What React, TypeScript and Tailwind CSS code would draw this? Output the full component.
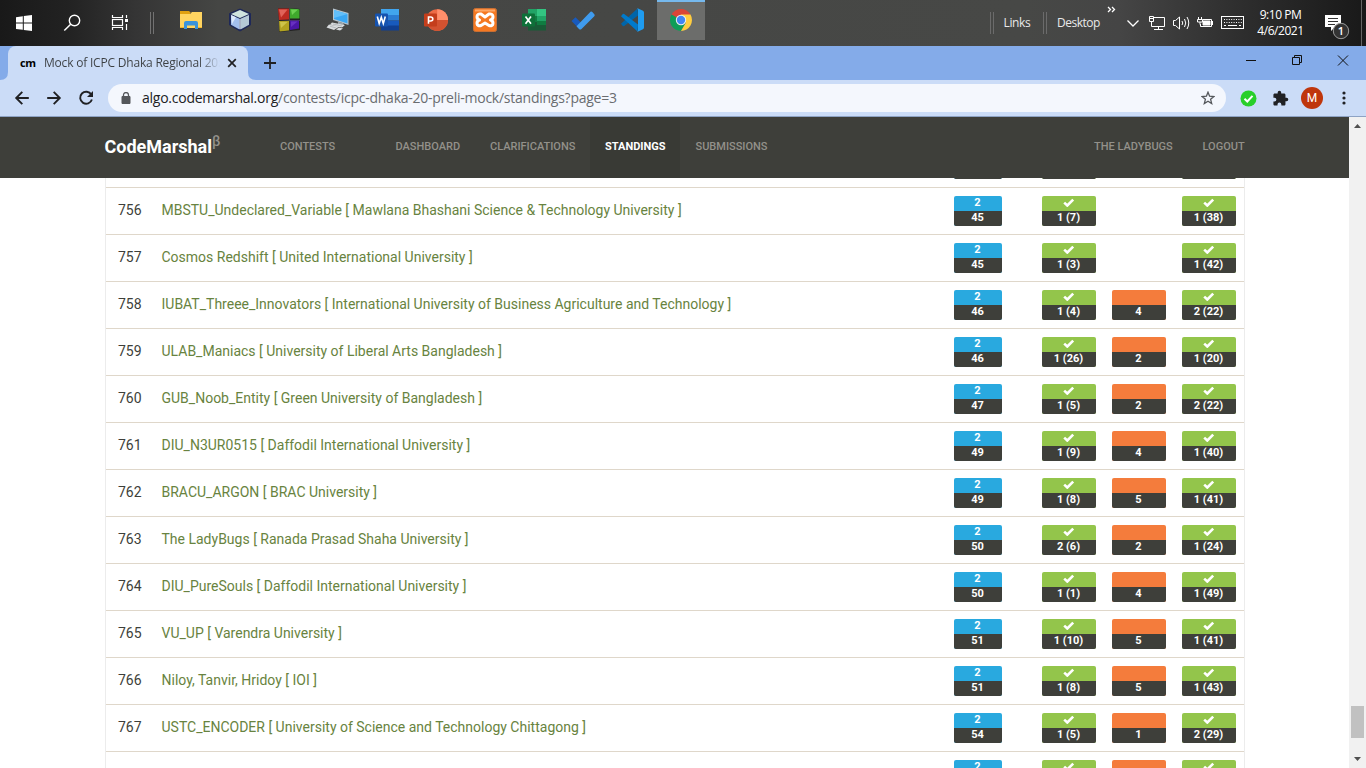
import React from "react";

type Solve = string | null;
type Row = { rank: number; name: string; time: number; a: string; b: Solve; c: string };

const rows: Row[] = [
  { rank: 755, name: "", time: 45, a: "1 (5)", b: null, c: "1 (38)" },
  { rank: 756, name: "MBSTU_Undeclared_Variable [ Mawlana Bhashani Science & Technology University ]", time: 45, a: "1 (7)", b: null, c: "1 (38)" },
  { rank: 757, name: "Cosmos Redshift [ United International University ]", time: 45, a: "1 (3)", b: null, c: "1 (42)" },
  { rank: 758, name: "IUBAT_Threee_Innovators [ International University of Business Agriculture and Technology ]", time: 46, a: "1 (4)", b: "4", c: "2 (22)" },
  { rank: 759, name: "ULAB_Maniacs [ University of Liberal Arts Bangladesh ]", time: 46, a: "1 (26)", b: "2", c: "1 (20)" },
  { rank: 760, name: "GUB_Noob_Entity [ Green University of Bangladesh ]", time: 47, a: "1 (5)", b: "2", c: "2 (22)" },
  { rank: 761, name: "DIU_N3UR0515 [ Daffodil International University ]", time: 49, a: "1 (9)", b: "4", c: "1 (40)" },
  { rank: 762, name: "BRACU_ARGON [ BRAC University ]", time: 49, a: "1 (8)", b: "5", c: "1 (41)" },
  { rank: 763, name: "The LadyBugs [ Ranada Prasad Shaha University ]", time: 50, a: "2 (6)", b: "2", c: "1 (24)" },
  { rank: 764, name: "DIU_PureSouls [ Daffodil International University ]", time: 50, a: "1 (1)", b: "4", c: "1 (49)" },
  { rank: 765, name: "VU_UP [ Varendra University ]", time: 51, a: "1 (10)", b: "5", c: "1 (41)" },
  { rank: 766, name: "Niloy, Tanvir, Hridoy [ IOI ]", time: 51, a: "1 (8)", b: "5", c: "1 (43)" },
  { rank: 767, name: "USTC_ENCODER [ University of Science and Technology Chittagong ]", time: 54, a: "1 (5)", b: "1", c: "2 (29)" },
];

function Check() {
  return (
    <svg width="12" height="9" viewBox="0 0 12 9" className="mt-[2px]">
      <path d="M1.200 4.600 L4.300 7.500 L10.200 1.600" fill="none" stroke="#fff" strokeWidth="2.600" />
    </svg>
  );
}

function Badge({ kind, bottom, top }: { kind: "blue" | "green" | "orange"; bottom: string; top?: string }) {
  const look = {
    blue: "w-12 bg-[#29a9df]",
    green: "w-[54px] bg-[#93c54b]",
    orange: "w-[54px] bg-[#f47c3c]",
  }[kind];
  return (
    <div className={`flex h-[30px] shrink-0 flex-col overflow-hidden rounded-[2px] text-center text-[11px] leading-[13px] font-bold text-white ${look}`}>
      <div className="flex h-[15px] justify-center">{kind === "green" ? <Check /> : <span className="pr-px">{top}</span>}</div>
      <div className="h-[15px] bg-[#3e3f3a] pr-px">{bottom}</div>
    </div>
  );
}

function StandingRow({ row }: { row: Row }) {
  return (
    <div className="flex h-[47px] shrink-0 items-start border-b border-[#dfd7ca] pt-2 pr-2 pl-3">
      <div className="mt-[4px] w-[43.500px] text-[14px] leading-5 text-[#3e3f3a]">{row.name && row.rank}</div>
      <div className="mt-[4px] flex-1 text-[14px] leading-5 whitespace-nowrap text-[#688340]">{row.name}</div>
      <Badge kind="blue" top="2" bottom={String(row.time)} />
      <div className="ml-10 flex gap-4">
        <Badge kind="green" bottom={row.a} />
        {row.b ? <Badge kind="orange" bottom={row.b} /> : <div className="w-[54px]" />}
        <Badge kind="green" bottom={row.c} />
      </div>
    </div>
  );
}

function AppIcon({ children }: { children: React.ReactNode }) {
  return (
    <div className="flex h-10 w-[49px] shrink-0 items-center justify-center">
      <svg width="24" height="24" viewBox="0 0 24 24">{children}</svg>
    </div>
  );
}

function Taskbar() {
  return (
    <div className="flex h-[46px] shrink-0 items-start overflow-hidden bg-[linear-gradient(90deg,#191919_0%,#222222_5%,#353535_10%,#454644_16%,#474846_75%,#454545_82%,#2b2b2b_92%,#191919_100%)] font-['Open_Sans','Noto_Sans',sans-serif] text-white">
      <svg width="166" height="46" viewBox="0 0 166 46" className="shrink-0">
        <path d="M16 17.200 L22.800 16.200 V22.500 H16z M23.800 16.100 L32 15 V22.500 H23.800z M16 23.500 H22.800 V29.800 L16 28.900z M23.800 23.500 H32 V31 L23.800 29.900z" fill="#fff" />
        <circle cx="74.500" cy="20.500" r="5.200" fill="none" stroke="#fff" strokeWidth="1.400" />
        <path d="M70.700 24.300 L64.300 30.500" stroke="#fff" strokeWidth="1.500" />
        <g fill="none" stroke="#fff" strokeWidth="1.200">
          <path d="M112.500 15 V17.500 H122.500 V15 M112.500 30 V27.500 H122.500 V30 M126.500 15 V18 M126.500 24 V30" />
          <rect x="112.500" y="19.500" width="10" height="6" />
        </g>
        <rect x="125" y="19" width="3" height="3" fill="#fff" />
        <path d="M150.500 12 V34 M153.500 12 V34" stroke="#727272" />
      </svg>
      <AppIcon>
        <path d="M1 3h9l2 2h-1v3H1z" fill="#e0a010" />
        <path d="M1 6h10l2-2h10v16H1z" fill="#ffd460" />
        <path d="M5 21v-6q0-2 2-2h10q2 0 2 2v6h-3v-3.500H8V21z" fill="#3993dc" />
        <path d="M1 19h4v1H1zM19 19h4v1h-4z" fill="#f3b52a" />
      </AppIcon>
      <AppIcon>
        <path d="M12 1 L22.500 5.500 V17 L12 23 L1.500 17 V5.500z" fill="#1e2858" stroke="#1e2858" strokeWidth="1" />
        <path d="M12 2 L21 6 L12 10 L3 6z" fill="#cfe3de" />
        <path d="M3 7 L11.500 10.800 V21.500 L3 16.700z" fill="#a3bfee" />
        <path d="M21 7 L12.500 10.800 V21.500 L21 16.700z" fill="#b5c9d6" />
        <path d="M3 7 L8 9.200 L4 16z" fill="#dce8fb" />
        <path d="M12 11 V21" stroke="#e8f0f8" />
      </AppIcon>
      <AppIcon>
        <path d="M1 0 H12 V12 L2 13z M13 0 L23 1 V12 H13z M2 13 H12.500 V23 L2 24z M13 13 H23 V22 L13 23z" fill="#222" />
        <path d="M1 0.500 H12 V11.500 L2 12z" fill="#bd2b22" />
        <path d="M2 1.500 H10.500 L4 9.500z" fill="#e06359" />
        <path d="M13 0.500 L22.500 1.300 V10.500 H13z" fill="#3fa92c" />
        <path d="M14 1.500 H21 L15 7z" fill="#6cd152" />
        <path d="M2 13 H12 V22.500 L2.500 23.500z" fill="#b3a421" />
        <path d="M3 14 H10.500 L4 20z" fill="#cdc44a" />
        <path d="M13 12.500 H22 V20.500 L13 22z" fill="#4c16a6" />
        <path d="M14 13.500 H20.500 L14 19z" fill="#6730c0" />
      </AppIcon>
      <AppIcon>
        <path d="M7 0.500 L22.500 5 V17 L7 12z" fill="#b7c5cf" />
        <path d="M8 2 L21.500 6 V15.500 L8 11z" fill="#3aa7f3" />
        <path d="M8 2 L21.500 6 L8 10z" fill="#62bffa" />
        <path d="M12 13.500 L17 15 L18 17 L12 16z" fill="#9aa5ad" />
        <path d="M6 14.500 L19 17 L16 19.500 L4 16.500z M3 16.500 L13 18.800 L8 22 L0.500 19.500z M13 19.500 L17 20.500 L14 22.500 L10 21.500z" fill="#d9dcde" />
        <path d="M7 16 L16 18 M4 18.200 L10 20" stroke="#9ba3a8" strokeWidth="0.600" />
      </AppIcon>
      <AppIcon>
        <path d="M6 1h18v6H6z" fill="#41a5ee" /><path d="M6 7h18v5.500H6z" fill="#2b7cd3" /><path d="M6 12.500h18V18H6z" fill="#185abd" /><path d="M6 17.500h18V22.500H6z" fill="#103f91" />
        <rect x="0" y="5.500" width="13" height="13" rx="1" fill="#1553b0" />
        <path d="M2.300 8.500 L4.200 15.500 L6.300 9.300 L8.300 15.500 L10.300 8.500" fill="none" stroke="#fff" strokeWidth="1.600" />
      </AppIcon>
      <AppIcon>
        <circle cx="13.200" cy="12" r="10.800" fill="#ed6c47" />
        <path d="M13.200 1.200 A10.800 10.800 0 0 1 24 12 H13.200z" fill="#ff8f6b" />
        <path d="M2.400 12 H24 A10.800 10.800 0 0 1 2.400 12z" fill="#d35230" />
        <rect x="0" y="5.500" width="13" height="13" rx="1" fill="#c43e1c" />
        <path d="M4.500 15.700 V9 H6.600 Q8.800 9 8.800 11 Q8.800 13 6.600 13 H4.500" fill="none" stroke="#fff" strokeWidth="1.600" />
      </AppIcon>
      <AppIcon>
        <rect x="0.500" y="0.500" width="23" height="23" rx="2" fill="#f57922" stroke="#c96f33" />
        <path d="M2 1.500h20v2H2z" fill="#fda765" />
        <path d="M8 6 C3 5 3 11 6.500 12 C3 13 3 19 8 17.500 L12 15 L16 17.500 C21 19 21 13 17.500 12 C21 11 21 5 16 6 L12 9z" fill="none" stroke="#fff" strokeWidth="3" strokeLinejoin="round" />
      </AppIcon>
      <AppIcon>
        <path d="M6 1h9v7H6z" fill="#21a366" /><path d="M15 1h9v7h-9z" fill="#33c481" /><path d="M6 8h9v7H6z" fill="#107c41" /><path d="M15 8h9v6h-9z" fill="#21a366" /><path d="M6 14h18v8.500H6z" fill="#185c37" /><path d="M15 13h9v4h-9z" fill="#107c41" />
        <rect x="0" y="5.500" width="13" height="13" rx="1" fill="#0e7039" />
        <path d="M3.500 8.500 L9 15.700 M9 8.500 L3.500 15.700" stroke="#fff" strokeWidth="1.700" />
      </AppIcon>
      <AppIcon>
        <path d="M0.500 13 L4.500 9.200 L11.500 16.200 L7.800 20.500z" fill="#185abd" />
        <path d="M5.500 18.300 L19.500 3.800 Q20.500 3 21.300 4 L23.500 6.500 Q24 7.500 23.300 8.200 L10.500 21 Q9.300 22 8 21z" fill="#3f9bee" />
      </AppIcon>
      <AppIcon>
        <path d="M17.500 0.500 L1 15.700 L3 18.200 L4.200 18 L18 7.500z" fill="#0065a9" />
        <path d="M17.500 23.500 L1 8.300 L3 5.800 L4.200 6 L18 16.500z" fill="#007acc" />
        <path d="M17 0 L23 2.800 Q24 3.300 24 4.500 V19.500 Q24 20.700 23 21.200 L17 24 Q18 23.300 18 21.500 V2.500 Q18 0.700 17 0z" fill="#1f9cf0" />
      </AppIcon>
      <div className="ml-px flex h-10 w-12 shrink-0 items-center justify-center border-t-2 border-[#76b9ed] bg-[#6c6d6b]">
        <svg width="24" height="24" viewBox="0 0 24 24" className="-mt-[2px]">
          <path d="M12 12 L2.500 6.500 A11 11 0 0 1 21.500 6.500z" fill="#db4437" />
          <path d="M12 12 L2.500 6.500 A11 11 0 0 0 12 23 L16.800 14.800z" fill="#0f9d58" />
          <path d="M12 6.500 H21.500 A11 11 0 0 1 12 23 L16.800 14.800z" fill="#ffcd40" />
          <circle cx="12" cy="12" r="5.200" fill="#f1f1f1" /><circle cx="12" cy="12" r="4.200" fill="#4285f4" />
        </svg>
      </div>
      <div className="flex-1" />
      <div className="mt-3 h-[22px] w-[4px] border-x border-[#6b6b6b]" />
      <div className="mt-[14px] ml-[9.500px] w-[39.500px] text-[12px] leading-[18px] tracking-[-0.350px] text-[#e9e9e9]">Links</div>
      <div className="mt-3 h-[22px] w-[4px] border-x border-[#6b6b6b]" />
      <div className="mt-[14px] ml-[10px] w-[49px] text-[12px] leading-[18px] tracking-[-0.500px] text-[#e9e9e9]">Desktop</div>
      <svg width="140" height="46" viewBox="1106 0 140 46" className="shrink-0" fill="none" stroke="#fff">
        <path d="M1108 7 L1110.500 9.500 L1108 12 M1112 7 L1114.500 9.500 L1112 12" strokeWidth="1.300" />
        <path d="M1127.500 20.500 L1133 26 L1138.500 20.500" strokeWidth="1.300" />
        <path d="M1153.500 17.500 H1164.500 V26.500 H1151.500 V22 M1158.500 27 V29.500 M1154 29.500 H1163 M1149.500 16.500 H1153.500 V21.500 H1149.500z M1150 18.500 H1153" />
        <path d="M1173.500 20.500 H1175.500 L1179.500 17 V29 L1175.500 25.500 H1173.500z M1182 21 Q1183.500 23 1182 25 M1184.500 19 Q1187 23 1184.500 27 M1187 17 Q1190.500 23 1187 29" />
        <path d="M1202.500 19.500 H1211.500 V26.500 H1200.500 V24 M1212.500 21 V25 M1198.500 17 V19 M1201.500 17 V19 M1197.500 19.500 H1202.500 V22 H1197.500z M1200 22 V24.500" />
        <path d="M1203 21 H1210 V25 H1203z" fill="#fff" />
        <rect x="1221.500" y="16.500" width="22" height="12" />
        <path d="M1224 19.500 H1242 M1224 22.500 H1242" strokeDasharray="1 1.400" /><path d="M1224 25.500 H1226 M1228 25.500 H1237 M1239 25.500 H1241" />
      </svg>
      <div className="mt-[7px] mr-px w-[69px] text-center text-[12px] leading-4 tracking-[-0.450px]">
        <div>9:10 PM</div>
        <div>4/6/2021</div>
      </div>
      <svg width="50" height="46" viewBox="1316 0 50 46" className="shrink-0">
        <path d="M1325 15 H1341 V27 H1335 L1331 31 V27 H1325z" fill="#fff" />
        <path d="M1328 18.500 H1338 M1328 21.500 H1338 M1328 24.500 H1335" stroke="#333" />
        <circle cx="1341" cy="31" r="7.700" fill="#333" stroke="#9b9b9b" />
        <text x="1341" y="35" textAnchor="middle" fontSize="11" fontWeight="600" fill="#fff">1</text>
        <path d="M1361.500 0 V46" stroke="#656565" />
      </svg>
    </div>
  );
}

function TabStrip() {
  return (
    <div className="flex h-[34px] shrink-0 items-end bg-[#84abe9] font-['Open_Sans','Noto_Sans',sans-serif]">
      <svg width="8" height="8" viewBox="0 0 8 8"><path d="M8 0 V8 H0 Q8 8 8 0z" fill="#cbdcf7" /></svg>
      <div className="flex h-[34px] w-60 items-center rounded-t-lg bg-[#cbdcf7]">
        <div className="ml-[12px] w-[24px] text-[11px] leading-[16px] font-bold tracking-[-0.300px] text-black">cm</div>
        <div className="w-[176px] overflow-hidden bg-[linear-gradient(90deg,#3c4043_0%,#3c4043_88%,transparent_100%)] bg-clip-text text-[12px] leading-[18px] tracking-[-0.200px] whitespace-nowrap text-transparent">Mock of ICPC Dhaka Regional 20:</div>
        <svg width="10" height="10" viewBox="0 0 10 10" className="ml-[7px]"><path d="M1.200 1.200 L8.800 8.800 M8.800 1.200 L1.200 8.800" stroke="#202124" strokeWidth="1.700" /></svg>
      </div>
      <svg width="8" height="8" viewBox="0 0 8 8"><path d="M0 0 V8 H8 Q0 8 0 0z" fill="#cbdcf7" /></svg>
      <svg width="12" height="12" viewBox="0 0 12 12" className="mb-[11px] ml-2"><path d="M6 0 V12 M0 6 H12" stroke="#202124" strokeWidth="1.800" /></svg>
      <div className="flex-1" />
      <svg width="126" height="34" viewBox="1240 46 126 34" fill="none" stroke="#111">
        <path d="M1246 60.500 H1256 M1338 55.500 L1348 65.500 M1348 55.500 L1338 65.500" />
        <path d="M1292.500 57.500 H1299.500 V64.500 H1292.500z M1294.500 57 V55.500 H1301.500 V62.500 H1300" />
      </svg>
    </div>
  );
}

function AddressBar() {
  return (
    <div className="flex h-[37px] shrink-0 items-center border-b border-[#8ea3c4] bg-[#cbdcf7] font-['Open_Sans','Noto_Sans',sans-serif]">
      <svg width="108" height="36" viewBox="0 80 108 36" fill="none" stroke="#202124" strokeWidth="1.900" className="shrink-0">
        <path d="M28.800 98 H16.500 M22.300 91.800 L16.200 98 L22.300 104.200" />
        <path d="M47.200 98 H59.500 M53.700 91.800 L59.800 98 L53.700 104.200" />
        <path d="M91.300 94.600 A6 6 0 1 0 91.900 99.500" />
        <path d="M93 91 V97 H87z" fill="#202124" stroke="none" />
      </svg>
      <div className="flex h-7 w-[1118px] items-center rounded-full bg-[#f4f7fd]">
        <svg width="10" height="12" viewBox="0 0 10 12" className="ml-[13px]"><path d="M1 4.500 H9 V11.500 H1z" fill="#54575b" stroke="#54575b" /><path d="M2.500 4.500 V3 A2.500 2.500 0 0 1 7.500 3 V4.500" fill="none" stroke="#54575b" strokeWidth="1.300" /></svg>
        <div className="ml-[11px] flex-1 text-[14px] leading-5 tracking-[-0.250px] text-[#696c70]"><span className="text-[#202124]">algo.codemarshal.org</span>/contests/icpc-dhaka-20-preli-mock/standings?page=3</div>
        <svg width="14" height="14" viewBox="0 0 14 14" className="mr-[11px]"><path d="M7 1.200 L8.600 5.200 L12.900 5.500 L9.600 8.300 L10.700 12.500 L7 10.200 L3.300 12.500 L4.400 8.300 L1.100 5.500 L5.400 5.200z" fill="none" stroke="#54575b" strokeWidth="1.300" /></svg>
      </div>
      <svg width="17" height="17" viewBox="0 0 17 17" className="ml-[13.500px]"><circle cx="8.500" cy="8.500" r="8" fill="#28cf2a" /><path d="M4.500 8.800 L7.300 11.500 L12.500 5.800" fill="none" stroke="#fff" strokeWidth="2" /></svg>
      <svg width="17" height="17" viewBox="0 0 24 24" className="ml-[15px]"><path d="M20.500 11H19V7c0-1.100-.9-2-2-2h-4V3.500a2.500 2.500 0 0 0-5 0V5H4c-1.100 0-2 .9-2 2v3.800h1.500a2.700 2.700 0 0 1 0 5.400H2V20c0 1.100.9 2 2 2h3.800v-1.500a2.700 2.700 0 0 1 5.400 0V22H17c1.100 0 2-.9 2-2v-4h1.500a2.500 2.500 0 0 0 0-5z" fill="#202124" /></svg>
      <div className="ml-[12.500px] flex h-[22px] w-[22px] items-center justify-center rounded-full bg-[#bf360c] font-[Roboto,sans-serif] text-[12px] text-white">M</div>
      <svg width="4" height="14" viewBox="0 0 4 14" className="ml-[19px]" fill="#202124"><circle cx="2" cy="2" r="1.600" /><circle cx="2" cy="7" r="1.600" /><circle cx="2" cy="12" r="1.600" /></svg>
    </div>
  );
}

function Nav() {
  return (
    <div className="flex h-[61px] shrink-0 bg-[#3e3f3a] pl-[104.500px] text-[11px] leading-[59px] font-medium whitespace-nowrap text-[#93918a]">
      <div className="flex w-[175.500px] text-[18px] font-bold tracking-[0px] text-white">
        CodeMarshal<span className="-mt-[5px] text-[14px] font-medium text-[#93918a]">β</span>
      </div>
      <div className="w-[115.500px]">CONTESTS</div>
      <div className="w-[94.500px]">DASHBOARD</div>
      <div className="w-[100px]">CLARIFICATIONS</div>
      <div className="w-[90px] bg-[#393a35] pl-[15px] font-bold text-white">STANDINGS</div>
      <div className="flex-1 pl-[15.500px]">SUBMISSIONS</div>
      <div className="w-[108.500px]">THE LADYBUGS</div>
      <div className="w-[146.500px]">LOGOUT</div>
    </div>
  );
}

export default function App() {
  return (
    <div className="flex h-[768px] w-[1366px] flex-col overflow-hidden bg-white">
      <Taskbar />
      <TabStrip />
      <AddressBar />
      <div className="flex min-h-0 flex-1 font-[Roboto,sans-serif]">
        <div className="flex min-w-0 flex-1 flex-col">
          <Nav />
          <div className="min-h-0 flex-1 overflow-hidden">
            <div className="-mt-[37px] ml-[105px] flex w-[1140px] flex-col border-x border-[#ececec]">
              {rows.map((row) => <StandingRow key={row.rank} row={row} />)}
              <StandingRow row={{ rank: 768, name: "", time: 54, a: "1 (5)", b: "1", c: "1 (29)" }} />
            </div>
          </div>
        </div>
        <div className="flex w-[17px] flex-col items-center justify-between bg-[#f1f1f1]">
          <svg width="17" height="17" viewBox="0 0 17 17"><path d="M5 11 L8.500 7 L12 11z" fill="#505050" /></svg>
          <div className="mt-auto mb-[13px] h-8 w-[13px] bg-[#c1c1c1]" />
          <svg width="17" height="17" viewBox="0 0 17 17"><path d="M5 6 L8.500 10 L12 6z" fill="#505050" /></svg>
        </div>
      </div>
    </div>
  );
}
